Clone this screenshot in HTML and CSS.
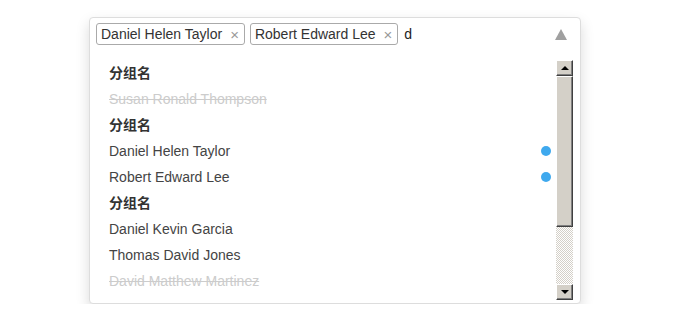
FILE: index.html
```html
<!DOCTYPE html>
<html lang="zh">
<head>
    <meta charset="UTF-8">
    <title>Multi Select</title>
    <link rel="stylesheet" href="styles.css">
</head>
<body>
    <div class="select-box">
        <div class="select-input">
            <span class="tag">Daniel Helen Taylor <span class="tag-close">×</span></span>
            <span class="tag">Robert Edward Lee <span class="tag-close">×</span></span>
            <span class="query">d</span>
            <span class="arrow"></span>
        </div>
        <div class="dropdown">
            <ul class="option-list">
                <li class="group">分组名</li>
                <li class="option disabled">Susan Ronald Thompson</li>
                <li class="group">分组名</li>
                <li class="option">Daniel Helen Taylor <span class="dot"></span></li>
                <li class="option">Robert Edward Lee <span class="dot"></span></li>
                <li class="group">分组名</li>
                <li class="option">Daniel Kevin Garcia</li>
                <li class="option">Thomas David Jones</li>
                <li class="option disabled">David Matthew Martinez</li>
            </ul>
            <div class="scrollbar">
                <div class="sb-btn"><span class="sb-up"></span></div>
                <div class="sb-thumb"></div>
                <div class="sb-track"></div>
                <div class="sb-btn"><span class="sb-down"></span></div>
            </div>
        </div>
    </div>
</body>
</html>
```

FILE: styles.css
```css
* {
    margin: 0;
    padding: 0;
    box-sizing: border-box;
}

body {
    font-family: 'Liberation Sans', Arial, 'Noto Sans CJK SC', sans-serif;
    font-size: 14px;
    background: #fff;
    color: #333;
    padding: 17px 0 0 89px;
}

.select-box {
    width: 492px;
    border: 1px solid #ddd;
    border-radius: 4px;
    box-shadow: 0 6px 14px rgba(0, 0, 0, 0.15);
    background: #fff;
}

.select-input {
    display: flex;
    align-items: flex-start;
    gap: 5px;
    padding: 5px 6px;
    height: 37px;
}

.tag {
    display: inline-flex;
    align-items: center;
    height: 22px;
    padding: 0 5px 0 4px;
    border: 1px solid #aaa;
    border-radius: 3px;
    color: #333;
    white-space: nowrap;
}

.tag-close {
    color: #999;
    font-size: 15px;
    margin-left: 8px;
}

.query {
    color: #222;
    line-height: 22px;
    margin-left: 1px;
}

.arrow {
    margin: 6px 7px 0 auto;
    width: 0;
    height: 0;
    border-left: 6px solid transparent;
    border-right: 6px solid transparent;
    border-bottom: 11px solid #a0a0a0;
}

.dropdown {
    display: flex;
    padding: 5px 7px 3px 0;
}

.option-list {
    list-style: none;
    flex: 1;
    height: 240px;
    overflow: hidden;
}

.option-list li {
    height: 26px;
    line-height: 26px;
    padding: 0 5px 0 19px;
    display: flex;
    align-items: center;
    justify-content: space-between;
}

.group {
    font-weight: bold;
    color: #333;
}

.option {
    color: #444;
}

.option.disabled {
    color: #ccc;
    text-decoration: line-through;
}

.dot {
    width: 10px;
    height: 10px;
    border-radius: 50%;
    background: #3fa9ee;
}

.scrollbar {
    width: 17px;
    height: 240px;
    display: flex;
    flex-direction: column;
}

.sb-btn {
    height: 16px;
    background: #d4d0c8;
    border: 1px solid;
    border-color: #fff #404040 #404040 #fff;
    box-shadow: inset -1px -1px 0 #808080;
    display: flex;
    align-items: center;
    justify-content: center;
}

.sb-up,
.sb-down {
    width: 0;
    height: 0;
    border-left: 4px solid transparent;
    border-right: 4px solid transparent;
}

.sb-up {
    border-bottom: 4px solid #000;
}

.sb-down {
    border-top: 4px solid #000;
}

.sb-thumb {
    height: 151px;
    background: #d4d0c8;
    border: 1px solid;
    border-color: #fff #404040 #404040 #fff;
    box-shadow: inset -1px -1px 0 #808080;
}

.sb-track {
    flex: 1;
    background: repeating-conic-gradient(#d4d0c8 0 25%, #fff 0 50%) 0 0 / 2px 2px;
}
```
